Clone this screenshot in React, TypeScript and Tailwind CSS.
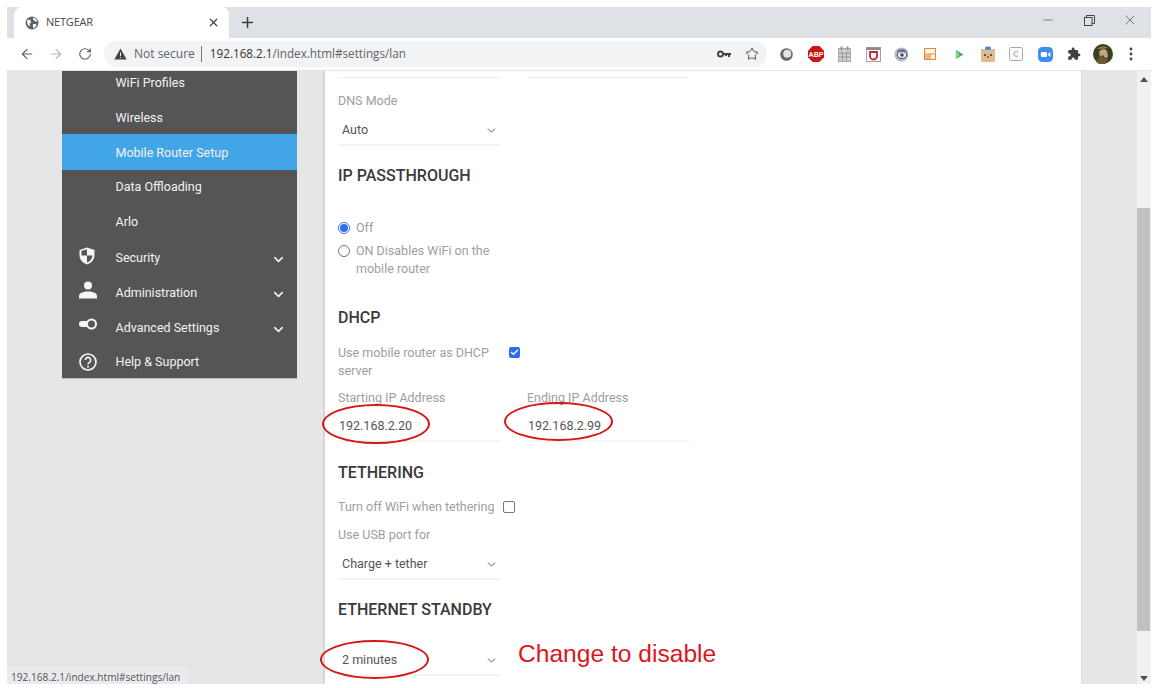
import React from "react";
import { ArrowLeft, ArrowRight, RotateCw, X, Plus, Star, Minus, ChevronDown, Check } from "lucide-react";

const Item = ({ label, active, chevron, icon, nudge, h = "h-[35px]" }: { label: string; active?: boolean; chevron?: boolean; icon?: React.ReactNode; nudge?: boolean; h?: string }) => (
  <div className={`${h} flex items-center text-[12.5px] text-[#f2f2f2] ${active ? "bg-[#42a5e5]" : ""}`}>
    <div className="w-[53.5px] flex justify-center pr-[1px]">{icon}</div>
    <span className={`flex-1 ${nudge ? "mt-[2px]" : ""}`}>{label}</span>
    {chevron && <ChevronDown size={15} strokeWidth={2.5} className="mr-[11px] mt-[4px] text-[#f2f2f2]" />}
  </div>
);

const Select = ({ value }: { value: string }) => (
  <div className="w-[162px] h-[31px] border-b-2 border-[#f3f3f3] flex items-center justify-between pt-[2px] pl-[4px] pr-[2px] text-[12.5px] text-[#555]">
    <span>{value}</span>
    <ChevronDown size={13} strokeWidth={1.6} className="text-[#444]" />
  </div>
);

const Ellipse = ({ className }: { className: string }) => (
  <div className={`absolute rounded-[50%] border-2 border-[#d41818] ${className}`} />
);

const Heading = ({ children, className }: { children: React.ReactNode; className: string }) => (
  <h2 className={`text-[16px] font-medium leading-[20px] text-[#3a3a3a] ${className}`}>{children}</h2>
);

const Slot = ({ children }: { children: React.ReactNode }) => (
  <div className="w-[28.7px] flex justify-center items-center shrink-0">{children}</div>
);

export default function App() {
  return (
    <div className="w-[1163px] h-[688px] bg-white overflow-hidden pt-[7px] pl-[7px] pr-[12px] pb-[4px] font-['Roboto',sans-serif]">
      <div className="w-[1144px] h-[677px] flex flex-col overflow-hidden">
        {/* tab strip */}
        <div className="h-[31px] bg-[#dee1e6] flex items-end shrink-0 pl-[7px] font-['Open_Sans',sans-serif]">
          <div className="w-[215px] h-[31px] bg-white rounded-t-[8px] flex items-center pl-[11px] pr-[9px] text-[11px] text-[#45494d]">
            <svg width="14" height="14" viewBox="0 0 24 24" className="mr-[7px] shrink-0">
              <circle cx="12" cy="12" r="11" fill="#5f6368" />
              <path d="M4 7c3-1 5 0 6 2s-1 3-2 4 1 3 0 5c-2 0-5-5-4-11zM14 3c3 0 6 3 7 6-2 1-4 0-5-1s-3-3-2-5zM14 14c2-1 5 0 6 1-1 3-4 6-6 6-1-2 1-3 0-4s-1-2 0-3z" fill="#fff" />
            </svg>
            <span className="flex-1 tracking-[-0.2px]">NETGEAR</span>
            <X size={13} strokeWidth={2.2} className="text-[#3c4043]" />
          </div>
          <Plus size={17} strokeWidth={2.2} className="ml-[10px] mb-[7px] text-[#3c4043]" />
          <div className="flex-1" />
          <div className="flex items-center self-start h-[31px] pb-[5px] text-[#444]">
            <Minus size={14} strokeWidth={1} className="mr-[29px]" />
            <svg width="11" height="11" viewBox="0 0 11 11" fill="none" stroke="#444" strokeWidth="1" className="mr-[27px]">
              <rect x="0.5" y="2.5" width="7.5" height="8" />
              <path d="M2.5 2.5V.5h8v8H8" />
            </svg>
            <X size={16} strokeWidth={1} className="mr-[13px]" />
          </div>
        </div>
        {/* toolbar */}
        <div className="h-[33px] bg-white flex items-center shrink-0 border-b border-[#e4e4e4] font-['Open_Sans',sans-serif]">
          <ArrowLeft size={16} strokeWidth={1.8} className="ml-[12px] text-[#5f6368]" />
          <ArrowRight size={16} strokeWidth={1.8} className="ml-[13px] text-[#b4b6b9]" />
          <RotateCw size={14} strokeWidth={2} className="ml-[14px] text-[#5f6368]" />
          <div className="ml-[12px] w-[663px] h-[26px] rounded-[13px] bg-[#f1f3f4] flex items-center pl-[10px] pr-[8px] text-[12px]">
            <svg width="13" height="12" viewBox="0 0 13 12" className="mr-[7px] shrink-0">
              <path d="M6.5 0.5 12.7 11.500H.3z" fill="#444" />
              <rect x="6" y="4.500" width="1" height="3.500" fill="#f1f3f4" />
              <rect x="6" y="9" width="1" height="1" fill="#f1f3f4" />
            </svg>
            <span className="text-[#5f6368]">Not secure</span>
            <span className="ml-[6px] mr-[8px] w-px h-[16px] bg-[#777]" />
            <span className="text-[11.7px] text-[#333]">192.168.2.1</span>
            <span className="text-[11.7px] text-[#5f6368]">/index.html#settings/lan</span>
            <div className="flex-1" />
            <svg width="14" height="8" viewBox="0 0 14 8" className="mr-[14px]">
              <circle cx="3.500" cy="4" r="2.500" fill="none" stroke="#444" strokeWidth="2" />
              <path d="M6 3h8v2h-1v2h-2V5h-1v1H8V5H6z" fill="#444" />
            </svg>
            <Star size={14} strokeWidth={1.6} className="text-[#444]" />
          </div>
          <div className="flex items-center ml-[5.6px]">
            <Slot>
              <svg width="13" height="13" viewBox="0 0 13 13">
                <circle cx="6.500" cy="6.500" r="6.300" fill="#666" />
                <circle cx="7.200" cy="5.800" r="4" fill="#e2e2e2" />
              </svg>
            </Slot>
            <Slot>
              <svg width="16" height="16" viewBox="0 0 16 16">
                <polygon points="4.700,0 11.300,0 16,4.700 16,11.300 11.300,16 4.700,16 0,11.300 0,4.700" fill="#cf1212" />
                <text x="8" y="10.600" textAnchor="middle" fill="#fff" fontSize="7" fontWeight="700" fontFamily="Liberation Sans, sans-serif">ABP</text>
              </svg>
            </Slot>
            <Slot>
              <svg width="13" height="16" viewBox="0 0 13 16">
                <rect x="0.500" y="2.500" width="12" height="13" fill="#cfcfcf" stroke="#a8a8a8" />
                <rect x="2.500" y="0.500" width="2" height="4" fill="#999" />
                <rect x="8.500" y="0.500" width="2" height="4" fill="#999" />
                <path d="M1 7h11M1 11h11M4.500 6v9M8.500 6v9" stroke="#8c8c8c" strokeWidth="0.800" />
              </svg>
            </Slot>
            <Slot>
              <svg width="15" height="15" viewBox="0 0 15 15">
                <rect x="0.500" y="0.500" width="14" height="14" fill="#fff" stroke="#a5a5a5" />
                <rect x="0.500" y="0.500" width="14" height="2.500" fill="#8a8a8a" />
                <path d="M4 5h7v4a3.500 3.500 0 0 1-7 0z" fill="none" stroke="#c4262e" strokeWidth="1.800" />
              </svg>
            </Slot>
            <Slot>
              <svg width="15" height="15" viewBox="0 0 15 15">
                <circle cx="7.500" cy="7.500" r="7" fill="#b5b7c6" />
                <ellipse cx="8" cy="8" rx="4.800" ry="3.400" fill="#f4f4f8" stroke="#3c4468" strokeWidth="1" />
                <circle cx="8" cy="8" r="1.800" fill="#3c4468" />
                <path d="M3 4.500C6 2.500 10 2.500 12.500 4.500" stroke="#3c4468" fill="none" strokeWidth="1" />
              </svg>
            </Slot>
            <Slot>
              <svg width="12" height="12" viewBox="0 0 12 12">
                <rect x="0.500" y="0.500" width="11" height="11" fill="#fff6ea" stroke="#e8873a" />
                <path d="M.5 6h11M6 6v5.500" stroke="#e8873a" strokeWidth="1.200" />
                <rect x="1" y="7" width="4" height="4" fill="#f3b08a" />
              </svg>
            </Slot>
            <Slot>
              <svg width="9" height="11" viewBox="0 0 10 11">
                <path d="M1 0.500 9.500 5.500 1 10.500z" fill="#4caf50" />
                <path d="M1 0.500 5 5.500 1 10.500z" fill="#8bd48e" />
              </svg>
            </Slot>
            <Slot>
              <svg width="14" height="16" viewBox="0 0 14 16">
                <rect x="0" y="3" width="14" height="13" fill="#dfbc8b" />
                <rect x="4" y="0.500" width="6" height="3.500" rx="1.500" fill="#4a90d9" />
                <circle cx="4" cy="9" r="1" fill="#333" />
                <circle cx="10" cy="9" r="1" fill="#333" />
                <path d="M6 11h2" stroke="#333" />
              </svg>
            </Slot>
            <Slot>
              <svg width="14" height="14" viewBox="0 0 14 14">
                <rect x="0.500" y="0.500" width="13" height="13" rx="1" fill="#fafafa" stroke="#aaa" />
                <path d="M9 5.200a2.400 2.400 0 1 0 0 3.600" fill="none" stroke="#999" />
              </svg>
            </Slot>
            <Slot>
              <svg width="15" height="15" viewBox="0 0 15 15">
                <rect width="15" height="15" rx="4.500" fill="#3d8df5" />
                <rect x="2.800" y="5" width="6.200" height="5" rx="1.200" fill="#fff" />
                <path d="M9.800 7 12.400 5v5L9.800 8z" fill="#fff" />
              </svg>
            </Slot>
            <Slot>
              <svg width="14" height="14" viewBox="0 0 24 24">
                <path d="M20.500 11H19V7a2 2 0 0 0-2-2h-4V3.500a2.500 2.500 0 0 0-5 0V5H4a2 2 0 0 0-2 2v3.800h1.500a2.700 2.700 0 0 1 0 5.400H2V20a2 2 0 0 0 2 2h3.800v-1.500a2.700 2.700 0 0 1 5.400 0V22H17a2 2 0 0 0 2-2v-4h1.500a2.500 2.500 0 0 0 0-5z" fill="#3f4347" />
              </svg>
            </Slot>
            <Slot>
              <svg width="20" height="20" viewBox="0 0 20 20">
                <circle cx="10" cy="10" r="10" fill="#39421f" />
                <path d="M6 8c1-3 6-4 8-1l1 6-3 1-2-3-3 2z" fill="#c9a082" />
                <path d="M3 18c2-5 6-6 9-5l3 3-3 4H6z" fill="#6b5a33" />
                <path d="M4 5c3-3 8-3 11-1l-5 1z" fill="#8b7b4a" />
              </svg>
            </Slot>
            <Slot>
              <svg width="4" height="14" viewBox="0 0 4 14">
                <circle cx="2" cy="2" r="1.400" fill="#444" />
                <circle cx="2" cy="7" r="1.400" fill="#444" />
                <circle cx="2" cy="12" r="1.400" fill="#444" />
              </svg>
            </Slot>
          </div>
        </div>
        {/* page */}
        <div className="flex-1 flex bg-[#e6e6e6] overflow-hidden relative">
          <div className="w-[55px] shrink-0" />
          <div className="w-[235px] h-[308px] shrink-0 bg-[#555555] border-b border-[#bbb] overflow-hidden">
            <div className="-mt-[6px]">
              <Item label="WiFi Profiles" nudge />
              <Item label="Wireless" nudge h="h-[34px]" />
              <Item label="Mobile Router Setup" active nudge h="h-[36px]" />
              <Item label="Data Offloading" />
              <Item label="Arlo" />
              <Item
                label="Security"
                chevron
                nudge
                icon={
                  <svg width="16" height="18" viewBox="0 0 16 18" className="-mt-[3px] mr-[3px]">
                    <path d="M8 0.500 15.500 3v5c0 4.500-3 8-7.500 9.500C3.500 16 .5 12.500.5 8V3z" fill="#f5f5f5" />
                    <path d="M8 2.500v6H2.500V3.800zM8 8.500h5.500C13 12 11 14.500 8 15.500z" fill="#555555" />
                  </svg>
                }
              />
              <Item
                label="Administration"
                chevron
                nudge
                icon={
                  <svg width="18" height="18" viewBox="0 0 18 18" className="-mt-[6px]">
                    <circle cx="9" cy="4.500" r="4" fill="#f5f5f5" />
                    <path d="M0 17.500v-2.500c0-3 4-4.500 9-4.500s9 1.500 9 4.500v2.500z" fill="#f5f5f5" />
                  </svg>
                }
              />
              <Item
                label="Advanced Settings"
                chevron
                nudge
                icon={
                  <svg width="18" height="12" viewBox="0 0 18 12" className="-mt-[8px]">
                    <rect x="0" y="3" width="12" height="6" rx="3" fill="#f5f5f5" />
                    <circle cx="12.500" cy="6" r="4.500" fill="#555555" stroke="#f5f5f5" strokeWidth="2" />
                  </svg>
                }
              />
              <Item
                label="Help & Support"
                icon={
                  <svg width="18" height="18" viewBox="0 0 18 18" className="-mt-[1px]">
                    <circle cx="9" cy="9" r="8" fill="none" stroke="#f5f5f5" strokeWidth="1.700" />
                    <path d="M6.300 7a2.700 2.700 0 1 1 4.200 2.300c-.9.6-1.500 1-1.500 2.200" fill="none" stroke="#f5f5f5" strokeWidth="1.600" />
                    <circle cx="9" cy="13.700" r="1" fill="#f5f5f5" />
                  </svg>
                }
              />
            </div>
          </div>
          <div className="w-[26px] shrink-0" />
          {/* main card */}
          <div className="w-[759px] shrink-0 bg-white border-l-2 border-r border-l-[#d6d6d6] border-r-[#dcdcdc] pl-[13px] text-[12.5px] text-[#9e9e9e] overflow-hidden">
            <div className="flex gap-[27px] mt-[6px]">
              <div className="w-[162px] border-b border-[#f0f0f0] h-[1px]" />
              <div className="w-[162px] border-b border-[#f0f0f0] h-[1px]" />
            </div>
            <div className="mt-[14px] leading-[18px]">DNS Mode</div>
            <div className="mt-[5px]"><Select value="Auto" /></div>
            <Heading className="mt-[20px]">IP PASSTHROUGH</Heading>
            <div className="mt-[33px] flex items-center h-[18px]">
              <div className="w-[12px] h-[12px] rounded-full border border-[#3b78e7] flex items-center justify-center mr-[6px]">
                <div className="w-[8px] h-[8px] rounded-full bg-[#2f6fed]" />
              </div>
              <span className="leading-[18px]">Off</span>
            </div>
            <div className="mt-[5px] flex w-[170px]">
              <div className="w-[12px] h-[12px] rounded-full border border-[#777] mr-[6px] mt-[3px] shrink-0" />
              <span className="leading-[18px]">ON Disables WiFi on the mobile router</span>
            </div>
            <Heading className="mt-[30px]">DHCP</Heading>
            <div className="mt-[16px] flex">
              <span className="w-[171px] leading-[18px]">Use mobile router as DHCP server</span>
              <div className="w-[11px] h-[11px] rounded-[2px] bg-[#2f6fed] flex items-center justify-center mt-[3px]">
                <Check size={9} strokeWidth={3.5} className="text-white" />
              </div>
            </div>
            <div className="flex gap-[27px] mt-[9px]">
              <div className="w-[162px]">
                <div className="leading-[18px]">Starting IP Address</div>
                <div className="h-[35px] border-b-2 border-[#f5f5f5] flex items-center pt-[6px] text-[#555]">
                  <span className="pl-px">192.168.2.20</span>
                </div>
              </div>
              <div className="w-[162px]">
                <div className="leading-[18px]">Ending IP Address</div>
                <div className="h-[35px] border-b-2 border-[#f5f5f5] flex items-center pt-[6px] text-[#555]">
                  <span className="pl-px">192.168.2.99</span>
                </div>
              </div>
            </div>
            <Heading className="mt-[21px]">TETHERING</Heading>
            <div className="mt-[15px] flex items-center h-[18px]">
              <span className="w-[165px]">Turn off WiFi when tethering</span>
              <div className="w-[12px] h-[12px] rounded-[2px] border border-[#777]" />
            </div>
            <div className="mt-[10px] leading-[18px]">Use USB port for</div>
            <div className="mt-[5px]"><Select value="Charge + tether" /></div>
            <Heading className="mt-[20px]">ETHERNET STANDBY</Heading>
            <div className="mt-[25px]"><Select value="2 minutes" /></div>
          </div>
          <div className="flex-1" />
          {/* scrollbar */}
          <div className="w-[14px] shrink-0 bg-[#f1f1f1] flex flex-col items-center">
            <svg width="8" height="5" viewBox="0 0 8 5" className="mt-[6px]"><path d="M4 0 8 5H0z" fill="#505050" /></svg>
            <div className="w-[13px] h-[423px] mt-[126px] bg-[#c1c1c1] self-start" />
            <div className="flex-1" />
            <svg width="8" height="5" viewBox="0 0 8 5" className="mb-[3px]"><path d="M4 5 8 0H0z" fill="#505050" /></svg>
          </div>
          {/* annotations */}
          <Ellipse className="left-[315px] top-[333px] w-[108px] h-[40px]" />
          <Ellipse className="left-[497px] top-[331px] w-[109px] h-[39px]" />
          <Ellipse className="left-[313px] top-[569px] w-[109px] h-[39px]" />
          <div className="absolute left-[511px] top-[568px] text-[24.6px] leading-[30px] text-[#e0141c] font-['Liberation_Sans',sans-serif]">Change to disable</div>
          <div className="absolute left-0 bottom-0 w-[180px] h-[17px] bg-[#e9ebee] rounded-tr-[3px] pl-[4px] text-[10.1px] leading-[21px] text-[#555] font-['Open_Sans',sans-serif] whitespace-nowrap">192.168.2.1/index.html#settings/lan</div>
        </div>
      </div>
    </div>
  );
}
